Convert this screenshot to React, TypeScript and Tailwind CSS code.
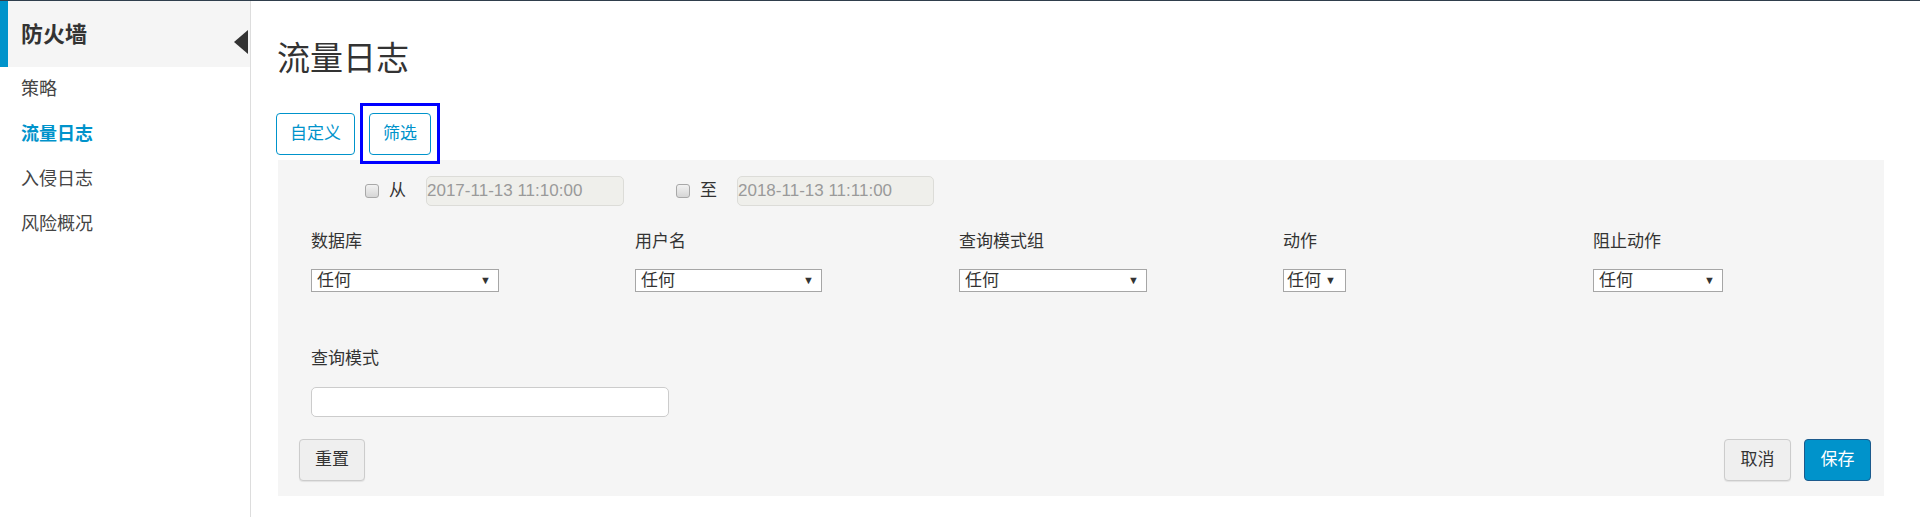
import React from "react";

const font = "font-['Liberation_Sans','Noto_Sans_CJK_SC',sans-serif]";

function Checkbox() {
  return (
    <div className="w-[14px] h-[14px] rounded-[3px] border border-[#a8a8a8] bg-gradient-to-b from-[#f2f2f2] to-[#d6d6d6] shrink-0" />
  );
}

function FakeSelect({ width, compact }: { width: string; compact?: boolean }) {
  return (
    <div
      className={`${width} h-[23px] bg-white border border-[#a6a6a6] flex items-center whitespace-nowrap ${compact ? "justify-start pl-[3px] pr-[4px]" : "justify-between pl-[5px] pr-[7px]"} text-[17px] leading-none text-[#333]`}
    >
      <span>任何</span>
      <span className={`text-[11px] text-[#333] ${compact ? "ml-[4px]" : "ml-[6px]"}`}>▼</span>
    </div>
  );
}

function Field({ label, width, colW, compact }: { label: string; width: string; colW: string; compact?: boolean }) {
  return (
    <div className={`${colW} shrink-0 flex flex-col`}>
      <div className="text-[17px] leading-[24px] text-[#333]">{label}</div>
      <div className="mt-[15px]">
        <FakeSelect width={width} compact={compact} />
      </div>
    </div>
  );
}

export default function App() {
  return (
    <div className={`${font} w-full h-[517px] bg-white border-t border-[#2f3e4c] flex overflow-hidden`}>
      {/* Sidebar */}
      <div className="relative w-[251px] shrink-0 border-r border-[#dddddd] h-full">
        <div className="h-[66px] bg-[#f5f5f5] border-l-[8px] border-[#0093cb] flex items-center pl-[13px]">
          <span className="text-[22px] font-bold text-[#333]">防火墙</span>
        </div>
        <div className="absolute left-[234px] top-[29px] w-0 h-0 border-y-[12px] border-y-transparent border-r-[14px] border-r-[#333]" />
        <nav className="flex flex-col text-[18px]">
          <div className="h-[45px] flex items-center pl-[21px] text-[#444]">策略</div>
          <div className="h-[45px] flex items-center pl-[21px] text-[#0093cb] font-bold">流量日志</div>
          <div className="h-[45px] flex items-center pl-[21px] text-[#444]">入侵日志</div>
          <div className="h-[45px] flex items-center pl-[21px] text-[#444]">风险概况</div>
        </nav>
      </div>

      {/* Main */}
      <div className="flex-1 pl-[25px] pr-[36px]">
        <h1 className="mt-[36px] text-[33px] leading-[44px] text-[#333] pl-[1px]">流量日志</h1>
        <div className="mt-[32px] flex gap-[14px]">
          <button className="h-[42px] px-[13px] rounded-[4px] border border-[#0093cb] text-[#0093cb] text-[17px] bg-white">
            自定义
          </button>
          <div className="relative">
            <button className="h-[42px] px-[13px] rounded-[4px] border border-[#0093cb] text-[#0093cb] text-[17px] bg-white">
              筛选
            </button>
            <span className="absolute left-[-9px] right-[-9px] top-[-10px] bottom-[-9px] border-[3px] border-[#0000ff] pointer-events-none" />
          </div>
        </div>

        <div className="ml-[2px] mt-[5px] w-[1606px] bg-[#f5f5f5] pb-[15px] pt-[16px]">
          {/* Date row */}
          <div className="h-[30px] flex items-center pl-[87px]">
            <Checkbox />
            <span className="ml-[10px] text-[17px] text-[#333]">从</span>
            <div className="ml-[20px] w-[198px] h-[30px] rounded-[5px] border border-[#dcdcd8] bg-[#efefeb] flex items-center text-[17px] text-[#9a9a9a] whitespace-nowrap overflow-hidden">
              2017-11-13 11:10:00
            </div>
            <div className="ml-[52px]">
              <Checkbox />
            </div>
            <span className="ml-[10px] text-[17px] text-[#333]">至</span>
            <div className="ml-[20px] w-[197px] h-[30px] rounded-[5px] border border-[#dcdcd8] bg-[#efefeb] flex items-center text-[17px] text-[#9a9a9a] whitespace-nowrap overflow-hidden">
              2018-11-13 11:11:00
            </div>
          </div>

          {/* Fields */}
          <div className="mt-[24px] pl-[33px] flex">
            <Field label="数据库" width="w-[188px]" colW="w-[324px]" />
            <Field label="用户名" width="w-[187px]" colW="w-[324px]" />
            <Field label="查询模式组" width="w-[188px]" colW="w-[324px]" />
            <Field label="动作" width="w-[63px]" colW="w-[310px]" compact />
            <Field label="阻止动作" width="w-[130px]" colW="w-[200px]" />
          </div>

          <div className="mt-[55px] pl-[33px]">
            <div className="text-[17px] leading-[24px] text-[#333]">查询模式</div>
            <div className="mt-[16px] w-[358px] h-[30px] rounded-[5px] border border-[#cccccc] bg-white" />
          </div>

          <div className="mt-[22px] pl-[21px] pr-[13px] flex justify-between">
            <button className="w-[66px] h-[42px] rounded-[4px] border border-[#cccccc] bg-[#efefef] text-[17px] text-[#333] shadow-[0_1px_1px_rgba(0,0,0,0.08)]">
              重置
            </button>
            <div className="flex gap-[13px]">
              <button className="w-[67px] h-[42px] rounded-[4px] border border-[#cccccc] bg-[#efefef] text-[17px] text-[#333] shadow-[0_1px_1px_rgba(0,0,0,0.08)]">
                取消
              </button>
              <button className="w-[67px] h-[42px] rounded-[4px] border border-[#1c5a8c] bg-[#0093cb] text-[17px] text-white">
                保存
              </button>
            </div>
          </div>
        </div>
      </div>
    </div>
  );
}
